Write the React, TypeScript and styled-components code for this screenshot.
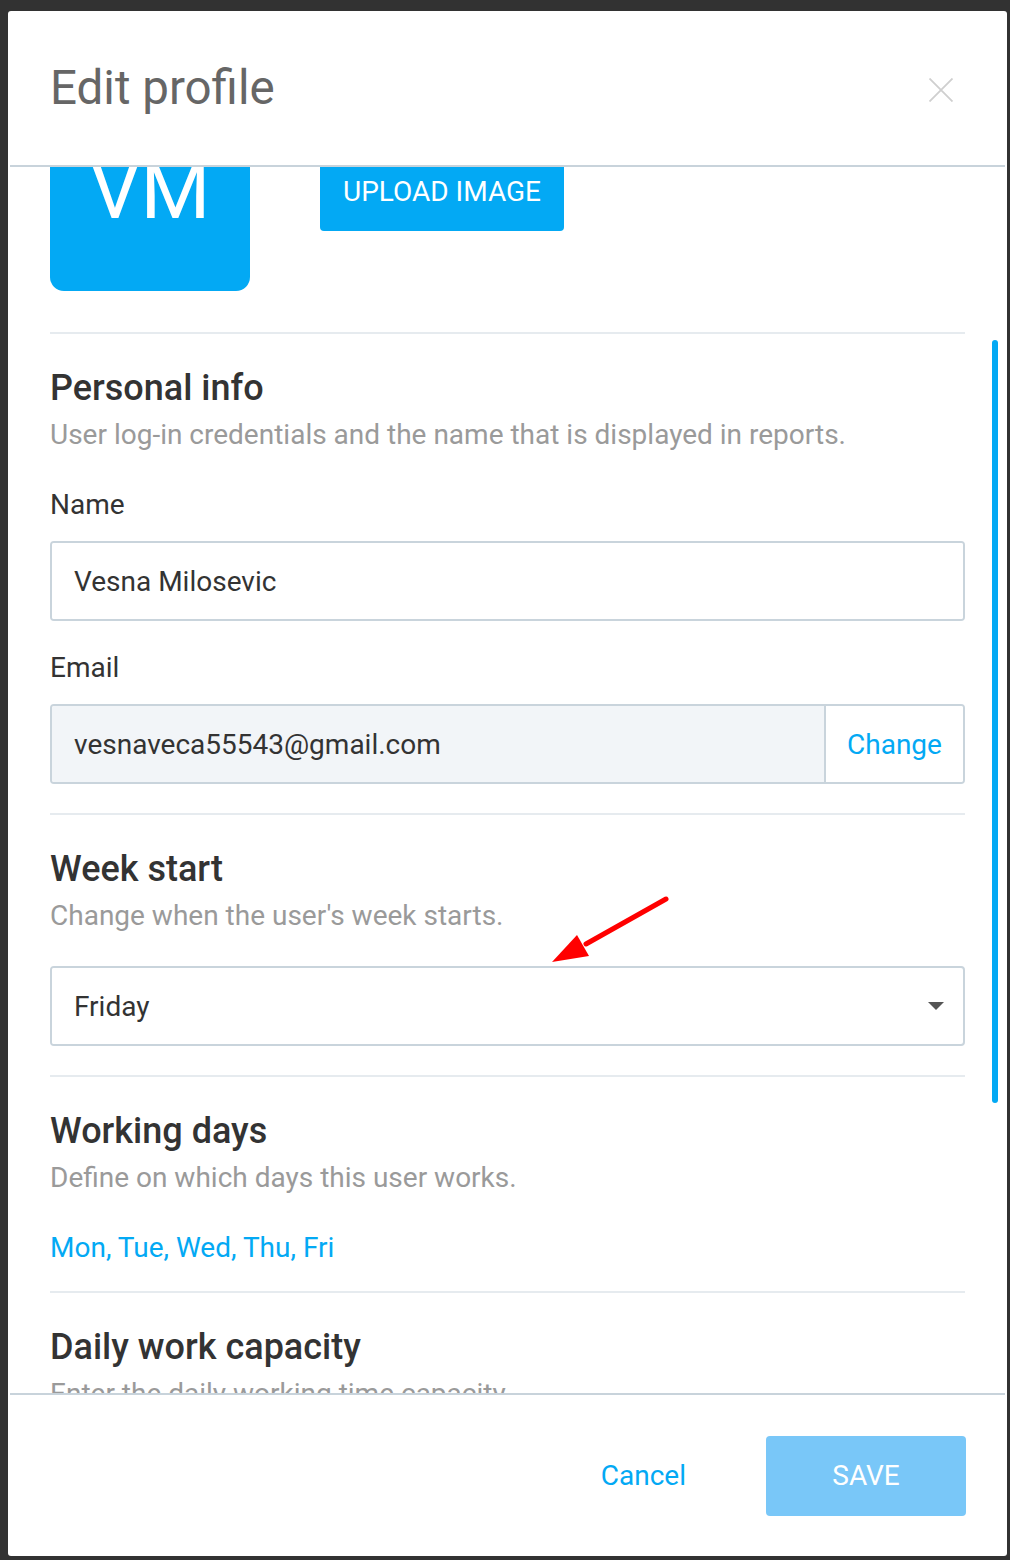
import React from "react";
import styled, { createGlobalStyle } from "styled-components";

const GlobalStyle = createGlobalStyle`
  html, body {
    margin: 0;
    padding: 0;
    background: #323232;
  }
  body {
    font-family: Roboto, "Liberation Sans", Arial, sans-serif;
    color: #333;
  }
`;

const Backdrop = styled.div`
  width: 1010px;
  height: 1560px;
  box-sizing: border-box;
  padding: 11px 3px 4px 8px;
  background: #323232;
`;

const Modal = styled.div`
  width: 999px;
  height: 1545px;
  background: #fff;
  border-radius: 3px;
  display: flex;
  flex-direction: column;
  overflow: hidden;
`;

const Header = styled.div`
  height: 154px;
  flex: none;
  display: flex;
  align-items: center;
  justify-content: space-between;
  padding: 0 52px 0 40px;
  border-bottom: 2px solid #c8d3db;
  margin: 0 2px;
`;

const Title = styled.h1`
  margin: 0;
  font-size: 47.5px;
  line-height: 56px;
  font-weight: 400;
  color: #666;
`;

const CloseButton = styled.button`
  width: 24px;
  height: 24px;
  padding: 0;
  margin-top: 4px;
  border: none;
  background: none;
  display: flex;
  align-items: center;
  justify-content: center;
`;

const Body = styled.div`
  flex: 1;
  position: relative;
  overflow: hidden;
  padding: 0 42px;
`;

const Scrolled = styled.div`
  margin-top: -76px;
`;

const ScrollThumb = styled.div`
  position: absolute;
  right: 9px;
  top: 173px;
  width: 6px;
  height: 763px;
  border-radius: 3px;
  background: #03a9f4;
`;

const AvatarRow = styled.div`
  display: flex;
  align-items: center;
  gap: 70px;
  padding-bottom: 41px;
  border-bottom: 2px solid #e6ebef;
`;

const Avatar = styled.div`
  width: 200px;
  height: 200px;
  border-radius: 14px;
  background: #03a9f4;
  color: #fff;
  font-size: 80px;
  display: flex;
  align-items: center;
  justify-content: center;
`;

const PrimaryButton = styled.button<{ $light?: boolean; $w: number }>`
  width: ${(p) => p.$w}px;
  height: 80px;
  border: none;
  border-radius: 4px;
  background: ${(p) => (p.$light ? "#79c7f8" : "#03a9f4")};
  color: #fff;
  font-family: Roboto, "Liberation Sans", Arial, sans-serif;
  font-size: 28px;
  text-transform: uppercase;
  padding: 0;
`;

const Section = styled.section<{ $last?: boolean; $bottom?: number }>`
  position: relative;
  padding: 34px 0 ${(p) => (p.$last ? 0 : p.$bottom ?? 29)}px;
  border-bottom: ${(p) => (p.$last ? "none" : "2px solid #e6ebef")};
`;

const SectionTitle = styled.h2`
  margin: 0;
  font-size: 36px;
  line-height: 40px;
  font-weight: 500;
  color: #333;
`;

const SectionHint = styled.p`
  margin: 11px 0 0;
  font-size: 28px;
  line-height: 32px;
  color: #9a9a9a;
`;

const Label = styled.div<{ $top?: number }>`
  margin-top: ${(p) => p.$top ?? 38}px;
  font-size: 28px;
  line-height: 32px;
  color: #333;
`;

const Field = styled.div<{ $top?: number }>`
  margin-top: ${(p) => p.$top ?? 20}px;
  height: 80px;
  box-sizing: border-box;
  border: 2px solid #c9d4dc;
  border-radius: 4px;
  display: flex;
  align-items: stretch;
  overflow: hidden;
`;

const FieldValue = styled.div<{ $muted?: boolean }>`
  flex: 1;
  display: flex;
  align-items: center;
  padding: 0 22px;
  font-size: 28px;
  color: #333;
  background: ${(p) => (p.$muted ? "#f2f5f8" : "#fff")};
`;

const SideButton = styled.button`
  width: 139px;
  box-sizing: border-box;
  border: none;
  border-left: 2px solid #c9d4dc;
  background: #fff;
  color: #03a9f4;
  font-family: Roboto, "Liberation Sans", Arial, sans-serif;
  font-size: 28px;
  padding: 0;
`;

const Caret = styled.div`
  width: 0;
  height: 0;
  align-self: center;
  margin-right: 19px;
  border-left: 8px solid transparent;
  border-right: 8px solid transparent;
  border-top: 8px solid #555;
`;

const LinkText = styled.a`
  display: block;
  margin-top: 38px;
  font-size: 28px;
  line-height: 32px;
  color: #03a9f4;
  text-decoration: none;
`;

const Arrow = styled.svg`
  position: absolute;
  left: 500px;
  top: 74px;
  overflow: visible;
`;

const Footer = styled.div`
  flex: none;
  height: 161px;
  margin: 0 2px;
  border-top: 2px solid #c8d3db;
  display: flex;
  align-items: center;
  justify-content: flex-end;
  padding-right: 39px;
  gap: 80px;
`;

const TextButton = styled.button`
  border: none;
  background: none;
  padding: 0;
  color: #03a9f4;
  font-family: Roboto, "Liberation Sans", Arial, sans-serif;
  font-size: 28px;
`;

export default function App() {
  return (
    <>
      <GlobalStyle />
      <Backdrop>
        <Modal>
          <Header>
            <Title>Edit profile</Title>
            <CloseButton aria-label="Close">
              <svg width="24" height="24" viewBox="0 0 24 24">
                <path d="M0.5 0.5L23.5 23.5M23.5 0.5L0.5 23.5" stroke="#cfcfcf" strokeWidth="1.8" />
              </svg>
            </CloseButton>
          </Header>
          <Body>
            <Scrolled>
              <AvatarRow>
                <Avatar>VM</Avatar>
                <PrimaryButton $w={244}>Upload image</PrimaryButton>
              </AvatarRow>

              <Section>
                <SectionTitle>Personal info</SectionTitle>
                <SectionHint>User log-in credentials and the name that is displayed in reports.</SectionHint>
                <Label>Name</Label>
                <Field>
                  <FieldValue>Vesna Milosevic</FieldValue>
                </Field>
                <Label $top={31}>Email</Label>
                <Field>
                  <FieldValue $muted>vesnaveca55543@gmail.com</FieldValue>
                  <SideButton>Change</SideButton>
                </Field>
              </Section>

              <Section>
                <SectionTitle>Week start</SectionTitle>
                <SectionHint>Change when the user's week starts.</SectionHint>
                <Arrow width="120" height="76" viewBox="0 0 120 76">
                  <path d="M116 10L36 55" stroke="#ff0000" strokeWidth="5" strokeLinecap="round" />
                  <path d="M2 73L27 46L39 67Z" fill="#ff0000" />
                </Arrow>
                <Field $top={34}>
                  <FieldValue>Friday</FieldValue>
                  <Caret />
                </Field>
              </Section>

              <Section $bottom={27}>
                <SectionTitle>Working days</SectionTitle>
                <SectionHint>Define on which days this user works.</SectionHint>
                <LinkText href="#">Mon, Tue, Wed, Thu, Fri</LinkText>
              </Section>

              <Section $last>
                <SectionTitle>Daily work capacity</SectionTitle>
                <SectionHint>Enter the daily working time capacity.</SectionHint>
              </Section>
            </Scrolled>
            <ScrollThumb />
          </Body>
          <Footer>
            <TextButton>Cancel</TextButton>
            <PrimaryButton $light $w={200}>Save</PrimaryButton>
          </Footer>
        </Modal>
      </Backdrop>
    </>
  );
}
